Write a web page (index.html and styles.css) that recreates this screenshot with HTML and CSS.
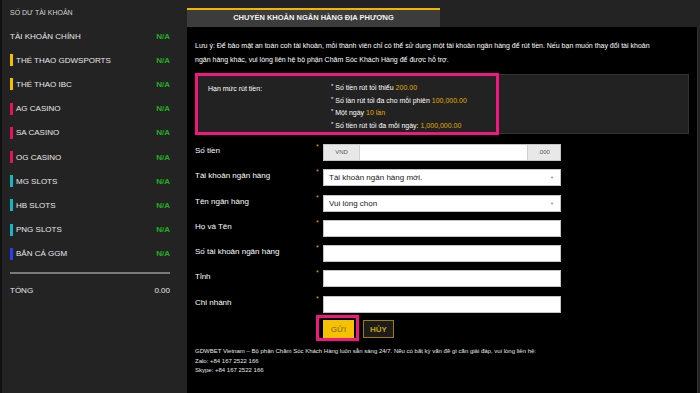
FILE: index.html
```html
<!DOCTYPE html>
<html lang="vi">

<head>
  <meta charset="UTF-8">
  <meta name="viewport" content="width=device-width, initial-scale=1.0">
  <title>Chuyển khoản ngân hàng địa phương</title>
  <link rel="stylesheet" href="styles.css">
</head>

<body>
  <div class="page">
    <aside class="balance">
      <h4 class="balance-title">SỐ DƯ TÀI KHOẢN</h4>
      <ul class="wallets">
        <li class="wallet"><span class="wallet-name">TÀI KHOẢN CHÍNH</span><span class="wallet-value">N/A</span></li>
        <li class="wallet"><span class="wallet-name"><i class="tag tag-sport"></i>THỂ THAO GDWSPORTS</span><span class="wallet-value">N/A</span></li>
        <li class="wallet"><span class="wallet-name"><i class="tag tag-sport"></i>THỂ THAO IBC</span><span class="wallet-value">N/A</span></li>
        <li class="wallet"><span class="wallet-name"><i class="tag tag-casino"></i>AG CASINO</span><span class="wallet-value">N/A</span></li>
        <li class="wallet"><span class="wallet-name"><i class="tag tag-casino"></i>SA CASINO</span><span class="wallet-value">N/A</span></li>
        <li class="wallet"><span class="wallet-name"><i class="tag tag-casino"></i>OG CASINO</span><span class="wallet-value">N/A</span></li>
        <li class="wallet"><span class="wallet-name"><i class="tag tag-slots"></i>MG SLOTS</span><span class="wallet-value">N/A</span></li>
        <li class="wallet"><span class="wallet-name"><i class="tag tag-slots"></i>HB SLOTS</span><span class="wallet-value">N/A</span></li>
        <li class="wallet"><span class="wallet-name"><i class="tag tag-slots"></i>PNG SLOTS</span><span class="wallet-value">N/A</span></li>
        <li class="wallet"><span class="wallet-name"><i class="tag tag-fish"></i>BẮN CÁ GGM</span><span class="wallet-value">N/A</span></li>
      </ul>
      <div class="total">
        <span>TỔNG</span>
        <span>0.00</span>
      </div>
    </aside>

    <main class="withdraw">
      <div class="tab">CHUYỂN KHOẢN NGÂN HÀNG ĐỊA PHƯƠNG</div>
      <div class="withdraw-body">
        <p class="note">Lưu ý: Để bảo mật an toàn coh tài khoản, mỗi thành viên chỉ có thể sử dụng một tài khoản ngân hàng để rút tiền. Nếu bạn muốn thay đổi tài khoản<br>ngân hàng khác, vui lòng liên hệ bộ phận Chăm Sóc Khách Hàng để được hỗ trợ.</p>

        <div class="limits">
          <div class="limits-label">Hạn mức rút tiền:</div>
          <ul class="limits-list">
            <li><sup>*</sup> Số tiền rút tối thiểu <em>200.00</em></li>
            <li><sup>*</sup> Số lần rút tối đa cho mỗi phiên <em>100,000.00</em></li>
            <li><sup>*</sup> Một ngày <em>10 lần</em></li>
            <li><sup>*</sup> Số tiền rút tối đa mỗi ngày: <em>1,000,000.00</em></li>
          </ul>
          <div class="mark mark-limits"></div>
        </div>

        <form class="form">
          <label class="form-label">Số tiền</label>
          <span class="req">*</span>
          <div class="amount">
            <span class="addon">VND</span>
            <input class="amount-input" type="text">
            <span class="addon addon-end">.000</span>
          </div>

          <label class="form-label">Tài khoản ngân hàng</label>
          <span class="req">*</span>
          <div class="select">
            <select>
              <option>Tài khoản ngân hàng mới.</option>
            </select>
            <span class="caret">▼</span>
          </div>

          <label class="form-label">Tên ngân hàng</label>
          <span class="req">*</span>
          <div class="select">
            <select>
              <option>Vui lòng chọn</option>
            </select>
            <span class="caret">▼</span>
          </div>

          <label class="form-label">Họ và Tên</label>
          <span class="req">*</span>
          <input class="field" type="text">

          <label class="form-label">Số tài khoản ngân hàng</label>
          <span class="req">*</span>
          <input class="field" type="text">

          <label class="form-label">Tỉnh</label>
          <span class="req">*</span>
          <input class="field" type="text">

          <label class="form-label">Chi nhánh</label>
          <span class="req">*</span>
          <input class="field" type="text">

          <div class="actions">
            <span class="submit-wrap">
              <button type="submit" class="btn btn-submit">GỬI</button>
              <span class="mark mark-submit"></span>
            </span>
            <button type="reset" class="btn btn-cancel">HỦY</button>
          </div>
        </form>

        <div class="contact">
          <p>GDWBET Vietnam – Bộ phận Chăm Sóc Khách Hàng luôn sẵn sàng 24/7. Nếu có bất kỳ vấn đề gì cần giải đáp, vui lòng liên hệ:</p>
          <p>Zalo: +84 167 2522 166</p>
          <p>Skype: +84 167 2522 166</p>
        </div>
      </div>
    </main>
  </div>
</body>

</html>
```

FILE: styles.css
```css
* {
  margin: 0;
  padding: 0;
  box-sizing: border-box;
}

body {
  font-family: "Liberation Sans", Arial, sans-serif;
  background: #232323;
  color: #fff;
  height: 393px;
  overflow: hidden;
}

.page {
  display: flex;
  height: 393px;
}

/* sidebar */

.balance {
  width: 180px;
  flex-shrink: 0;
  padding: 0 10px 0 8px;
  border-left: 2px solid #111;
}

.balance-title {
  font-size: 7px;
  font-weight: normal;
  color: #d4d4d4;
  height: 24px;
  line-height: 25px;
}

.wallets {
  list-style: none;
}

.wallet,
.total {
  display: flex;
  justify-content: space-between;
  align-items: center;
  height: 24.2px;
  font-size: 8px;
  color: #e8e8e8;
}

.wallet-name {
  display: flex;
  align-items: center;
}

.wallet-value {
  color: #22b022;
  font-weight: bold;
}

.tag {
  display: inline-block;
  width: 3px;
  height: 12px;
  margin-right: 3px;
}

.tag-sport { background: #f2c200; }
.tag-casino { background: #e8115e; }
.tag-slots { background: #17b6c6; }
.tag-fish { background: #2b3df2; }

.total {
  border-top: 2px solid #7a7a7a;
  padding-top: 3px;
  height: 33px;
  margin-top: 6px;
}

/* main panel */

.withdraw {
  width: 511px;
  margin-left: 7px;
  margin-top: 8px;
  display: flex;
  flex-direction: column;
}

.tab {
  width: 253px;
  height: 19px;
  border-top: 2px solid #f2b600;
  background: #3c3c3c;
  font-size: 7.5px;
  font-weight: bold;
  line-height: 16px;
  text-align: center;
  color: #f2f2f2;
}

.withdraw-body {
  flex: 1;
  background: #000;
  border-right: 1px solid #333;
  padding: 12px 8px 0 8px;
}

.note {
  font-size: 7px;
  line-height: 14px;
  white-space: nowrap;
}

.limits {
  position: relative;
  display: flex;
  margin-top: 7px;
  height: 60px;
  padding: 6px 12px 0;
  background: #222;
  border: 1px solid #333;
  font-size: 7px;
}

.limits-label {
  width: 123px;
  line-height: 12px;
  padding-top: 2px;
}

.limits-list {
  list-style: none;
  line-height: 11.7px;
}

.limits-list sup {
  font-size: 6px;
  vertical-align: 2px;
}

.limits-list em {
  font-style: normal;
  color: #e3aa00;
}

.mark {
  position: absolute;
  border: 3px solid #f0177f;
}

.mark-limits {
  left: -1px;
  top: -2px;
  bottom: -2px;
  width: 304px;
}

/* form */

.form {
  display: grid;
  grid-template-columns: 121px 7px 238px;
  row-gap: 8.3px;
  margin-top: 10px;
}

.form-label {
  font-size: 8px;
  line-height: 13px;
}

.req {
  color: #e3aa00;
  font-size: 7px;
  line-height: 6px;
}

.field,
.amount,
.select select {
  display: block;
  height: 17px;
  width: 238px;
  border: 1px solid #c4c4c4;
  background: #fff;
  font-family: inherit;
  font-size: 8px;
}

.amount {
  display: flex;
}

.addon {
  width: 35px;
  background: #e8e8e8;
  color: #555;
  font-size: 6px;
  line-height: 15px;
  text-align: center;
}

.addon-end {
  width: 33px;
  border-left: 1px solid #d0d0d0;
}

.amount-input {
  flex: 1;
  border: none;
  border-left: 1px solid #d0d0d0;
  min-width: 0;
}

.select {
  position: relative;
  height: 17px;
}

.select select {
  appearance: none;
  -webkit-appearance: none;
  padding-left: 5px;
  color: #222;
  border-radius: 0;
}

.caret {
  position: absolute;
  right: 7px;
  top: 6px;
  font-size: 4px;
  color: #888;
}

.actions {
  grid-column: 3;
  display: flex;
  gap: 9px;
  margin-top: -1px;
}

.submit-wrap {
  position: relative;
}

.mark-submit {
  left: -7px;
  right: -5px;
  top: -5px;
  bottom: -3px;
}

.btn {
  display: block;
  height: 18px;
  width: 31px;
  font-family: inherit;
  font-size: 8px;
  cursor: pointer;
}

.btn-submit {
  background: #f6c200;
  border: 1px solid #f6c200;
  color: #7d6000;
}

.btn-cancel {
  background: #1c1c1c;
  border: 1px solid #a07d00;
  color: #c9a200;
  font-weight: bold;
}

.contact {
  margin-top: 9px;
  font-size: 6px;
  line-height: 9.5px;
  color: #e6e6e6;
}
```
